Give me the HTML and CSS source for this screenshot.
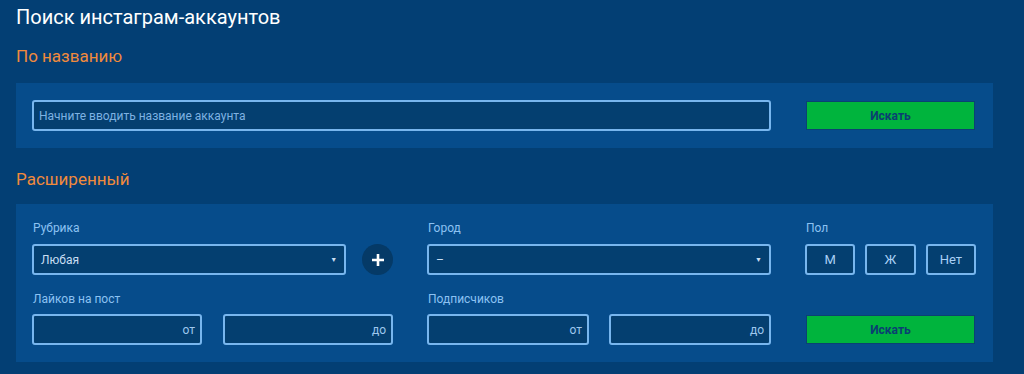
FILE: index.html
```html
<!DOCTYPE html>
<html lang="ru">
<head>
  <meta charset="UTF-8" />
  <title>Поиск инстаграм-аккаунтов</title>
  <link rel="stylesheet" href="styles.css">
</head>
<body>
  <div class="page">
    <h1>Поиск инстаграм-аккаунтов</h1>

    <h2>По названию</h2>
    <div class="panel grid">
      <input class="field wide" type="text" placeholder="Начните вводить название аккаунта" />
      <button class="search">Искать</button>
    </div>

    <h2>Расширенный</h2>
    <div class="panel grid">
      <div class="group">
        <label>Рубрика</label>
        <div class="row">
          <div class="select short"><span>Любая</span><i class="arrow">▼</i></div>
          <button class="plus">
            <svg width="14" height="14" viewBox="0 0 14 14"><path d="M7 1v12M1 7h12" stroke="#fff" stroke-width="2.6" /></svg>
          </button>
        </div>
      </div>

      <div class="group">
        <label>Город</label>
        <div class="select"><span>–</span><i class="arrow">▼</i></div>
      </div>

      <div class="group">
        <label>Пол</label>
        <div class="sex">
          <button class="opt">М</button>
          <button class="opt">Ж</button>
          <button class="opt">Нет</button>
        </div>
      </div>

      <div class="group">
        <label>Лайков на пост</label>
        <div class="pair">
          <div class="field range">от</div>
          <div class="field range">до</div>
        </div>
      </div>

      <div class="group">
        <label>Подписчиков</label>
        <div class="pair">
          <div class="field range">от</div>
          <div class="field range">до</div>
        </div>
      </div>

      <div class="group bottom">
        <button class="search">Искать</button>
      </div>
    </div>
  </div>
</body>
</html>
```

FILE: styles.css
```css
body {
  margin: 0;
  background: #033f74;
  font-family: Roboto, 'Liberation Sans', sans-serif;
  color: #fff;
}

.page {
  width: 977px;
  padding: 0 0 0 16px;
}

h1 {
  margin: 0;
  padding-top: 4px;
  font-size: 20px;
  line-height: 26px;
  font-weight: 400;
  color: #fff;
}

h2 {
  margin: 0;
  font-size: 17px;
  line-height: 22px;
  font-weight: 400;
  color: #f08a3c;
}

h1 + h2 {
  margin-top: 15px;
}

.panel {
  background: #064c8b;
  padding: 17px 16px;
  margin: 16px 0 20px;
  box-sizing: border-box;
}

.panel + h2 {
  margin-top: 0;
}

.grid {
  display: grid;
  grid-template-columns: 361px 344px 171px;
  column-gap: 34px;
  row-gap: 16px;
}

.panel.grid:last-child {
  padding-top: 16px;
  margin-top: 14px;
}

.field,
.select,
.opt {
  box-sizing: border-box;
  height: 31px;
  border: 2px solid #78b6ee;
  border-radius: 3px;
  background: #043f70;
  font-family: inherit;
  font-size: 12px;
  color: #c9def2;
}

.wide {
  grid-column: 1 / 3;
  padding: 0 5px;
  outline: none;
}

.wide::placeholder {
  color: #7eb2e2;
}

.search {
  align-self: center;
  height: 29px;
  margin: 0 1px;
  border: 1px solid #0b4272;
  background: #00b43d;
  color: #0a3f72;
  font-family: inherit;
  font-size: 12px;
  font-weight: 700;
}

.group label {
  display: block;
  font-size: 12px;
  line-height: 16px;
  color: #8cc2f2;
  margin: 0 0 8px 1px;
}

.group:nth-child(n+4) label {
  margin-bottom: 7px;
}

.row {
  display: flex;
  align-items: center;
  gap: 16px;
}

.select {
  display: flex;
  align-items: center;
  justify-content: space-between;
  padding: 0 7px;
}

.select.short {
  width: 315px;
}

.arrow {
  font-style: normal;
  font-size: 7px;
  color: #c9def2;
}

.plus {
  width: 31px;
  height: 31px;
  border: none;
  border-radius: 50%;
  background: #053a67;
  display: flex;
  align-items: center;
  justify-content: center;
  padding: 0;
}

.sex {
  display: grid;
  grid-template-columns: repeat(3, 1fr);
  gap: 10px;
}

.opt {
  color: #a9d0f5;
  font-size: 13px;
}

.pair {
  display: flex;
  justify-content: space-between;
}

.range {
  width: 170px;
  display: flex;
  align-items: center;
  justify-content: flex-end;
  padding: 0 5px;
  color: #9ec8ee;
}

.group:nth-child(5) .range {
  width: 162px;
}

.bottom {
  display: flex;
  align-items: flex-end;
}

.bottom .search {
  align-self: flex-end;
  width: 169px;
  margin-bottom: 1px;
}
```
